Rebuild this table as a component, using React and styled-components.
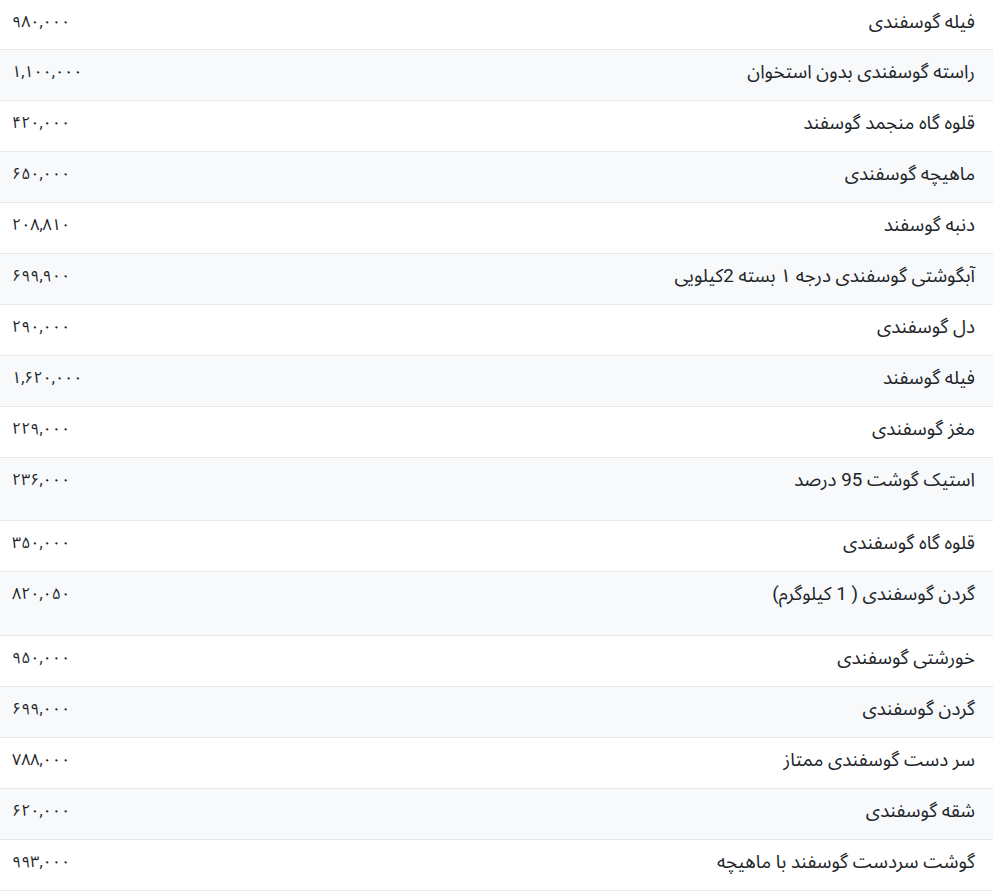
import React from 'react'
import styled, { createGlobalStyle } from 'styled-components'

const GlobalStyle = createGlobalStyle`
  html, body {
    margin: 0;
    padding: 0;
    background: #fff;
  }
  body {
    font-family: Roboto, "Noto Sans Arabic", "DejaVu Sans", sans-serif;
    color: #212529;
  }
`

const Table = styled.div`
  direction: rtl;
  width: 993px;
`

const Row = styled.div`
  display: flex;
  align-items: flex-start;
  box-sizing: border-box;
  height: ${(props) => props.h}px;
  padding-top: 9px;
  background: ${(props) => (props.striped ? '#f8f9fa' : '#fff')};
  border-bottom: 1px solid #e6e8ea;
`

const Name = styled.div`
  flex: 1;
  padding-right: 18px;
  font-size: 18.8px;
  line-height: 26px;
  text-align: right;
`

const Price = styled.div`
  width: 180px;
  padding-left: 12px;
  font-size: 16px;
  line-height: 26px;
  text-align: left;
`

const items = [
  ['فیله گوسفندی', 980000, 50],
  ['راسته گوسفندی بدون استخوان', 1100000],
  ['قلوه گاه منجمد گوسفند', 420000],
  ['ماهیچه گوسفندی', 650000],
  ['دنبه گوسفند', 208810],
  ['آبگوشتی گوسفندی درجه ۱ بسته 2کیلویی', 699900],
  ['دل گوسفندی', 290000],
  ['فیله گوسفند', 1620000],
  ['مغز گوسفندی', 229000],
  ['استیک گوشت 95 درصد', 236000, 63],
  ['قلوه گاه گوسفندی', 350000],
  ['گردن گوسفندی ( 1 کیلوگرم)', 820050, 64],
  ['خورشتی گوسفندی', 950000],
  ['گردن گوسفندی', 699000],
  ['سر دست گوسفندی ممتاز', 788000],
  ['شقه گوسفندی', 620000],
  ['گوشت سردست گوسفند با ماهیچه', 993000],
]

const faDigits = '۰۱۲۳۴۵۶۷۸۹'
const formatPrice = (n) =>
  n
    .toString()
    .replace(/\B(?=(\d{3})+(?!\d))/g, ',')
    .replace(/\d/g, (d) => faDigits[d])

export default function App() {
  return (
    <>
      <GlobalStyle />
      <Table>
        {items.map(([name, price, h], index) => (
          <Row key={index} h={h || 51} striped={index % 2 === 1}>
            <Name>{name}</Name>
            <Price>
              <span dir="ltr">{formatPrice(price)}</span>
            </Price>
          </Row>
        ))}
      </Table>
    </>
  )
}
